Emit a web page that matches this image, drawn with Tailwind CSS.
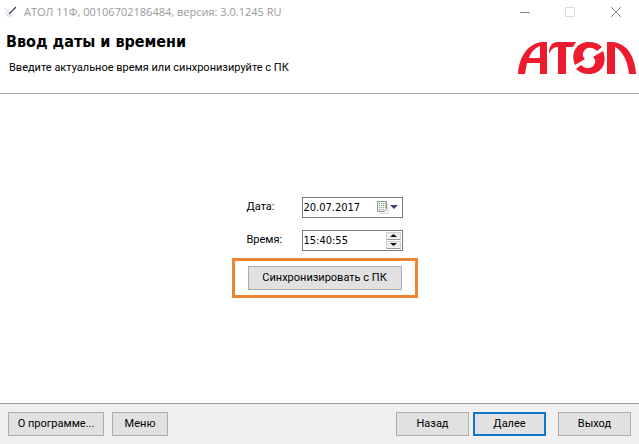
<!DOCTYPE html>
<html lang="ru">
  <head>
    <meta charset="UTF-8" />
    <meta name="viewport" content="width=device-width, initial-scale=1.0" />
    <title>АТОЛ 11Ф</title>
    <script src="https://cdn.jsdelivr.net/npm/@tailwindcss/browser@4"></script>
  </head>
  <body class="flex min-h-screen flex-col bg-white font-['Roboto','Open_Sans',sans-serif] text-[11px] leading-4 text-black">
    <!-- Title bar -->
    <div class="flex h-6 items-center pl-1 font-['Open_Sans','Noto_Sans',sans-serif] text-[#999]">
      <svg class="mr-2 h-3 w-3" viewBox="0 0 12 12" fill="none" aria-hidden="true">
        <path d="M1 2l5 5M1 6l5 5M3 10l6-1" stroke="#dbe4ea" stroke-width="1.5" />
        <path d="M12 1L5 8" stroke="#444455" stroke-width="1.3" />
      </svg>
      <span>АТОЛ 11Ф, 00106702186484, версия: 3.0.1245 RU</span>
      <div class="ml-auto flex">
        <button type="button" class="flex h-6 w-[45px] items-center justify-center" aria-label="Свернуть">
          <svg class="h-3 w-3" viewBox="0 0 12 12"><path d="M1 6.500h10" stroke="#888" /></svg>
        </button>
        <button type="button" class="flex h-6 w-[46px] items-center justify-center" aria-label="Развернуть" disabled>
          <svg class="h-3 w-3" viewBox="0 0 12 12"><path d="M1.500 1.500h9v9h-9z" fill="none" stroke="#ddd" /></svg>
        </button>
        <button type="button" class="flex h-6 w-[46px] items-center justify-center" aria-label="Закрыть">
          <svg class="h-3 w-3" viewBox="0 0 12 12"><path d="M1 1l10 10M11 1L1 11" stroke="#888" /></svg>
        </button>
      </div>
    </div>

    <!-- Page header -->
    <header class="flex h-[70px] justify-between border-b border-[#a0a0a0] pl-[6px]">
      <div>
        <h1 class="mt-2 font-['DejaVu_Sans_Condensed','DejaVu_Sans',sans-serif] text-base leading-5 font-bold">Ввод даты и времени</h1>
        <p class="mt-2 pl-[3px]">Введите актуальное время или синхронизируйте с ПК</p>
      </div>
      <svg class="mt-[18px] mr-[3px] h-8 w-[118px]" viewBox="0 0 118 32" fill="#ec1b2e" role="img" aria-label="АТОЛ">
        <path fill-rule="evenodd" d="M0 32C1 17 8 2 24 0H29V32H22V21H9Q8 26 7 32zM11 16H22V4C17 6 13 10 11 16z" />
        <path d="M31 12C31 5 33 0 40 0H58L55 5H48V32H40V5C35 5 33 8 31 12z" />
        <path d="M57 23C52 10 59 0 71 0Q79 0 84 5L79 9C74 4 67 5 65 11Q64 14 67 17z" />
        <path d="M85 9C90 22 83 32 71 32Q63 32 58 27L63 23C68 28 75 27 77 21Q78 18 75 15z" />
        <path d="M89 0H94C110 1 117 16 118 32H111C110 20 105 9 97 5V32H89z" />
      </svg>
    </header>

    <main class="flex grow flex-col items-center justify-center pb-[3px] pl-2.5">
      <div class="grid grid-cols-[55px_101px] items-center gap-y-3">
        <label for="date">Дата:</label>
        <div class="flex h-[21px] items-center border border-[#7a7a7a] pr-1">
          <input id="date" type="text" value="20.07.2017" class="h-[19px] w-full min-w-0 pt-px pl-px font-['DejaVu_Sans_Condensed','DejaVu_Sans',sans-serif] outline-none" />
          <button type="button" class="shrink-0" aria-label="Календарь">
            <svg class="h-[14px] w-[22px]" viewBox="0 0 22 14" aria-hidden="true">
              <path d="M3 13.500h9V3" fill="none" stroke="#d5d5d5" />
              <path d="M1.500 1.500h9v8l-2 2h-7z" fill="#eef3e8" stroke="#8b9499" />
              <path d="M3 3.500h7M3 5.500h7M3 7.500h7M3 9.500h5" stroke="#8aa08a" stroke-dasharray="1 1" />
              <path d="M14 5h8l-4 4z" fill="#404070" />
            </svg>
          </button>
        </div>
        <label for="time">Время:</label>
        <div class="flex h-[21px] items-center border border-[#7a7a7a] pr-px">
          <input id="time" type="text" value="15:40:55" class="h-[19px] w-full min-w-0 pt-px pl-px font-['DejaVu_Sans_Condensed','DejaVu_Sans',sans-serif] outline-none" />
          <div class="flex shrink-0 flex-col gap-px">
            <button type="button" class="flex h-2 w-[15px] items-center justify-center border border-[#d0d0d0] border-b-[#999] bg-[#f0f0f0]" aria-label="Больше">
              <svg class="h-[3px] w-[7px]" viewBox="0 0 7 3"><path d="M0 3l3.500-3L7 3z" fill="#111" /></svg>
            </button>
            <button type="button" class="flex h-2 w-[15px] items-center justify-center border border-[#d0d0d0] border-b-[#999] bg-[#f0f0f0]" aria-label="Меньше">
              <svg class="h-[3px] w-[7px]" viewBox="0 0 7 3"><path d="M0 0h7L3.500 3z" fill="#111" /></svg>
            </button>
          </div>
        </div>
      </div>
      <div class="mt-[7px] border-3 border-[#ee8535] px-[13px] py-[5px]">
        <button type="button" class="h-6 w-[154px] border border-[#adadad] bg-[#e1e1e1]">Синхронизировать с ПК</button>
      </div>
    </main>

    <footer class="flex h-[41px] items-center gap-2 border-t border-[#a0a0a0] bg-[#f0f0f0] px-2">
      <button type="button" class="h-6 w-24 border border-[#adadad] bg-[#e1e1e1]">О программе...</button>
      <button type="button" class="h-6 w-14 border border-[#adadad] bg-[#e1e1e1]">Меню</button>
      <div class="ml-auto flex">
        <button type="button" class="h-6 w-[73px] border border-[#adadad] bg-[#e1e1e1]">Назад</button>
        <button type="button" class="ml-1 h-6 w-[73px] border-2 border-[#0f76cc] bg-[#e1e1e1]">Далее</button>
        <button type="button" class="ml-3 h-6 w-[73px] border border-[#adadad] bg-[#e1e1e1]">Выход</button>
      </div>
    </footer>
  </body>
</html>
